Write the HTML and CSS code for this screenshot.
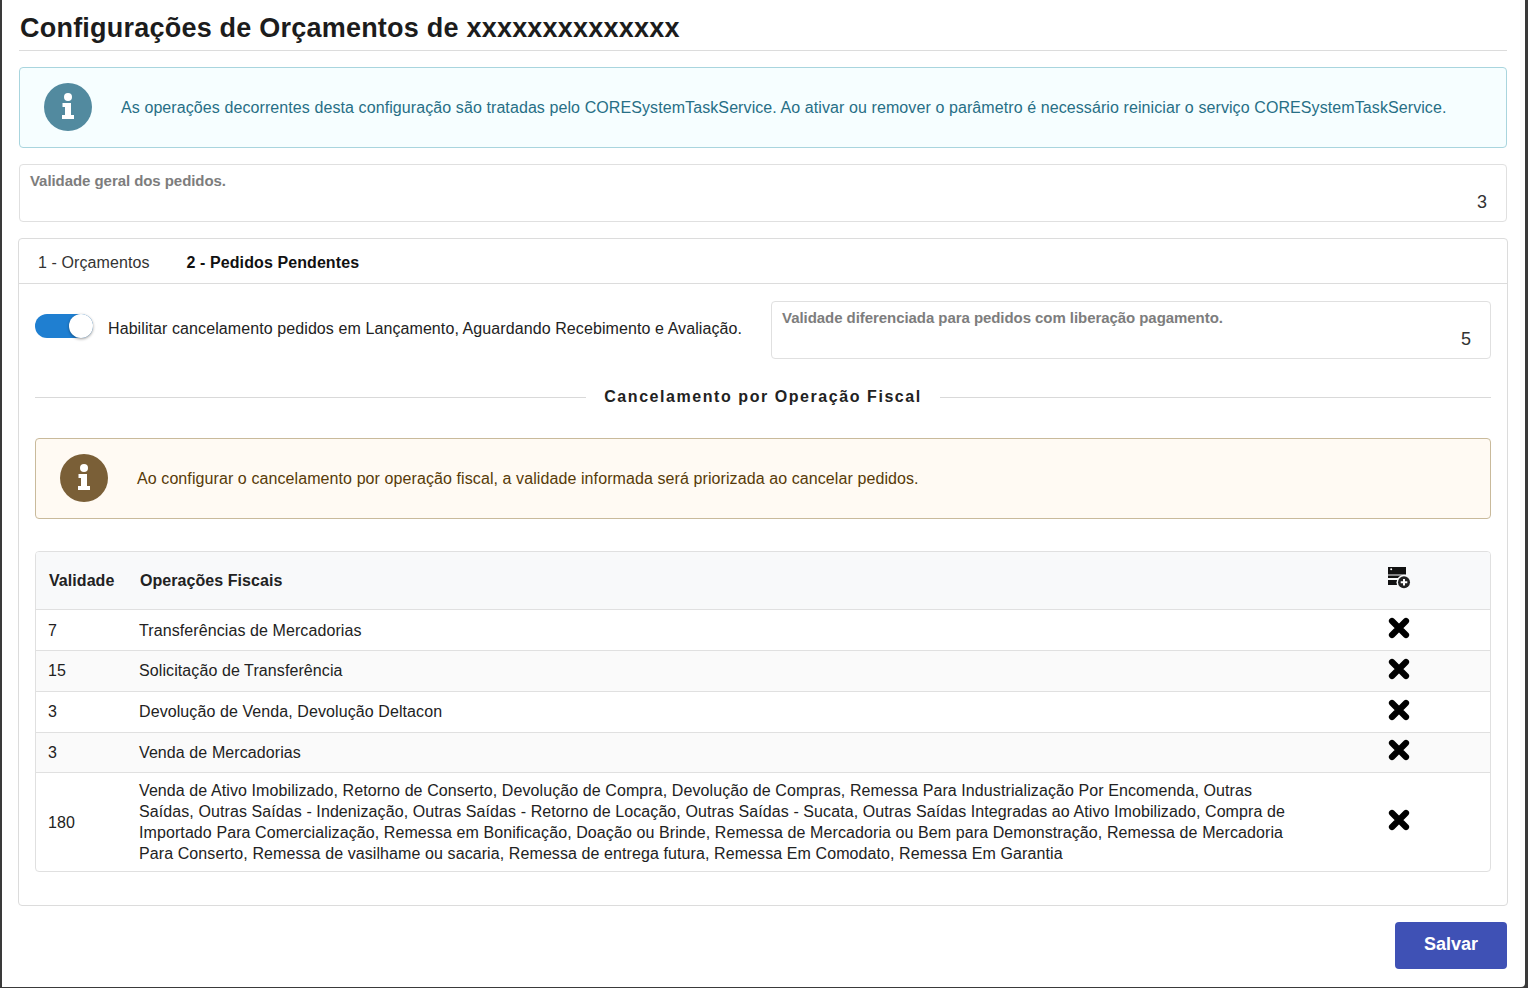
FILE: index.html
```html
<!DOCTYPE html>
<html lang="pt-BR">
<head>
  <meta charset="UTF-8" />
  <title>Configurações de Orçamentos</title>
  <link rel="stylesheet" href="styles.css">
</head>
<body>
  <div class="janela">
    <h1 class="titulo">Configurações de Orçamentos de xxxxxxxxxxxxxx</h1>

    <div class="aviso aviso-info">
      <svg class="aviso-icone" viewBox="0 0 48 48"><circle cx="24" cy="24" r="24" fill="currentColor"/><circle cx="24" cy="14" r="4" fill="#fff"/><path d="M18.500 20h8.500v12h3v4H18v-4h3v-8h-2.500z" fill="#fff"/></svg>
      <p>As operações decorrentes desta configuração são tratadas pelo CORESystemTaskService. Ao ativar ou remover o parâmetro é necessário reiniciar o serviço CORESystemTaskService.</p>
    </div>

    <div class="campo">
      <label>Validade geral dos pedidos.</label>
      <div class="campo-valor">3</div>
    </div>

    <div class="cartao">
      <div class="abas">
        <span class="aba">1 - Orçamentos</span>
        <span class="aba ativa">2 - Pedidos Pendentes</span>
      </div>
      <div class="cartao-corpo">
        <div class="linha-opcoes">
          <div class="toggle"><span class="toggle-bola"></span></div>
          <span class="toggle-texto">Habilitar cancelamento pedidos em Lançamento, Aguardando Recebimento e Avaliação.</span>
          <div class="campo campo-menor">
            <label>Validade diferenciada para pedidos com liberação pagamento.</label>
            <div class="campo-valor">5</div>
          </div>
        </div>

        <div class="divisor"><span>Cancelamento por Operação Fiscal</span></div>

        <div class="aviso aviso-alerta">
          <svg class="aviso-icone" viewBox="0 0 48 48"><circle cx="24" cy="24" r="24" fill="currentColor"/><circle cx="24" cy="14" r="4" fill="#fff"/><path d="M18.500 20h8.500v12h3v4H18v-4h3v-8h-2.500z" fill="#fff"/></svg>
          <p>Ao configurar o cancelamento por operação fiscal, a validade informada será priorizada ao cancelar pedidos.</p>
        </div>

        <div class="tabela-borda">
          <table class="tabela">
            <thead>
              <tr>
                <th class="col-validade">Validade</th>
                <th class="col-operacoes">Operações Fiscais</th>
                <th class="col-acao">
                  <svg class="icone-add" viewBox="0 0 24 24"><rect x="0" y="1" width="18" height="7.500" fill="#111"/><rect x="0" y="9.500" width="18" height="2.500" fill="#111"/><rect x="0" y="14" width="18" height="5" fill="#111"/><circle cx="3.200" cy="3.200" r="1" fill="#fff"/><circle cx="16" cy="16.300" r="7.500" fill="#f8f9fa"/><circle cx="16" cy="16.300" r="6" fill="#222"/><path d="M15 13h2v2.300h2.300v2H17v2.300h-2v-2.300h-2.300v-2H15z" fill="#fff"/></svg>
                </th>
              </tr>
            </thead>
            <tbody>
              <tr>
                <td>7</td>
                <td>Transferências de Mercadorias</td>
                <td class="col-acao"><svg class="icone-x" viewBox="0 0 24 24"><path d="M5 5l14 14M19 5L5 19" stroke="#000" stroke-width="6.200" stroke-linecap="round"/></svg></td>
              </tr>
              <tr>
                <td>15</td>
                <td>Solicitação de Transferência</td>
                <td class="col-acao"><svg class="icone-x" viewBox="0 0 24 24"><path d="M5 5l14 14M19 5L5 19" stroke="#000" stroke-width="6.200" stroke-linecap="round"/></svg></td>
              </tr>
              <tr>
                <td>3</td>
                <td>Devolução de Venda, Devolução Deltacon</td>
                <td class="col-acao"><svg class="icone-x" viewBox="0 0 24 24"><path d="M5 5l14 14M19 5L5 19" stroke="#000" stroke-width="6.200" stroke-linecap="round"/></svg></td>
              </tr>
              <tr>
                <td>3</td>
                <td>Venda de Mercadorias</td>
                <td class="col-acao"><svg class="icone-x" viewBox="0 0 24 24"><path d="M5 5l14 14M19 5L5 19" stroke="#000" stroke-width="6.200" stroke-linecap="round"/></svg></td>
              </tr>
              <tr>
                <td class="celula-baixa">180</td>
                <td>Venda de Ativo Imobilizado, Retorno de Conserto, Devolução de Compra, Devolução de Compras, Remessa Para Industrialização Por Encomenda, Outras Saídas, Outras Saídas - Indenização, Outras Saídas - Retorno de Locação, Outras Saídas - Sucata, Outras Saídas Integradas ao Ativo Imobilizado, Compra de Importado Para Comercialização, Remessa em Bonificação, Doação ou Brinde, Remessa de Mercadoria ou Bem para Demonstração, Remessa de Mercadoria Para Conserto, Remessa de vasilhame ou sacaria, Remessa de entrega futura, Remessa Em Comodato, Remessa Em Garantia</td>
                <td class="col-acao"><svg class="icone-x" viewBox="0 0 24 24"><path d="M5 5l14 14M19 5L5 19" stroke="#000" stroke-width="6.200" stroke-linecap="round"/></svg></td>
              </tr>
            </tbody>
          </table>
        </div>
      </div>
    </div>

    <div class="rodape">
      <button type="button" class="btn-salvar">Salvar</button>
    </div>
  </div>
</body>
</html>
```

FILE: styles.css
```css
* {
  box-sizing: border-box;
}
html, body {
  height: 100%;
}
body {
  margin: 0;
  background-color: #3a3a3a;
  font-family: "Liberation Sans", Arial, sans-serif;
  color: #212121;
  font-size: 16px;
  letter-spacing: 0.09px;
  overflow: hidden;
}
.janela {
  background-color: #fff;
  width: 1523px;
  height: 987px;
  margin-left: 2px;
  padding: 0 18px 0 17px;
  border-bottom-right-radius: 4px;
}
.titulo {
  margin: 0 0 16px;
  height: 51px;
  padding: 12px 0 0 1px;
  font-size: 27px;
  line-height: 32px;
  font-weight: bold;
  letter-spacing: 0.22px;
  color: #1c1c1c;
  border-bottom: 1px solid #dcdcdc;
}
.aviso {
  display: flex;
  align-items: center;
  height: 81px;
  padding: 0 24px;
  border: 1px solid;
  border-radius: 4px;
  font-size: 16px;
}
.aviso p {
  margin: 0 0 0 29px;
}
.aviso-icone {
  width: 48px;
  height: 48px;
  flex: none;
  margin-top: -1px;
}
.aviso-info {
  background-color: #f6feff;
  border-color: #a9d5de;
  color: #276f86;
}
.aviso-info .aviso-icone {
  color: #528a9f;
}
.aviso-alerta {
  background-color: #fffaf3;
  border-color: #c9ba9b;
  color: #573a08;
}
.aviso-alerta .aviso-icone {
  color: #7a5f37;
}
.campo {
  position: relative;
  height: 58px;
  margin-top: 16px;
  padding: 7px 10px;
  border: 1px solid #e0e0e0;
  border-radius: 4px;
}
.campo label {
  display: block;
  font-size: 15px;
  line-height: 17px;
  font-weight: bold;
  letter-spacing: -0.06px;
  color: #7d7d7d;
}
.campo-valor {
  margin-top: 1px;
  padding-right: 9px;
  text-align: right;
  font-size: 18px;
  line-height: 24px;
  color: #333;
}
.cartao {
  width: 1490px;
  height: 668px;
  margin-top: 16px;
  margin-left: -1px;
  border: 1px solid #dcdcdc;
  border-radius: 4px;
}
.abas {
  display: flex;
  height: 45px;
  border-bottom: 1px solid #dcdcdc;
  padding-left: 19px;
  gap: 37px;
}
.aba {
  font-size: 16px;
  line-height: 47px;
  color: #333;
}
.aba.ativa {
  font-weight: bold;
  color: #111;
}
.cartao-corpo {
  padding: 17px 16px 0;
}
.linha-opcoes {
  display: flex;
  align-items: center;
}
.toggle {
  position: relative;
  width: 58px;
  height: 24px;
  flex: none;
  margin-top: -8px;
  background-color: #1f7fd1;
  border-radius: 12px;
}
.toggle-bola {
  position: absolute;
  right: 0;
  top: 0;
  width: 24px;
  height: 24px;
  border-radius: 50%;
  background-color: #fff;
  box-shadow: 0 1px 3px rgba(0, 0, 0, 0.4);
}
.toggle-texto {
  margin: -2px 0 0 15px;
  color: #222;
  white-space: nowrap;
}
.campo-menor {
  flex: 1;
  margin: 0 0 0 29px;
}
.divisor {
  display: flex;
  align-items: center;
  gap: 18px;
  margin-top: 25px;
  height: 26px;
  font-weight: bold;
  letter-spacing: 1.56px;
  color: #222;
  white-space: nowrap;
}
.divisor::before,
.divisor::after {
  content: "";
  flex: 1;
  height: 1px;
  background-color: #d9d9d9;
}
.aviso-alerta {
  margin-top: 28px;
}
.tabela-borda {
  margin-top: 32px;
  border: 1px solid #e0e0e0;
  border-radius: 4px;
  overflow: hidden;
}
.tabela {
  width: 100%;
  border-collapse: collapse;
  table-layout: fixed;
}
.tabela th {
  height: 57px;
  padding: 2px 12px 0 13px;
  text-align: left;
  font-weight: bold;
  letter-spacing: 0.06px;
  background-color: #f8f9fa;
  color: #222;
}
.tabela td {
  height: 41px;
  padding: 0 12px;
  border-top: 1px solid #e0e0e0;
  line-height: 21px;
  color: #222;
}
.tabela td:nth-child(2) {
  padding-right: 92px;
}
.tabela tbody tr:nth-child(even) td {
  background-color: #fafafa;
}
.tabela tbody tr:first-child td:not(.col-acao) {
  padding-top: 2px;
}
.tabela tbody tr:nth-child(4) td {
  height: 40px;
}
.tabela tbody tr:last-child td {
  height: 99px;
}
.tabela .celula-baixa {
  padding-top: 2px;
}
.col-validade {
  width: 91px;
}
.col-operacoes {
  width: 1260px;
}
.tabela .col-acao {
  padding: 0;
}
.icone-add {
  display: block;
  width: 24px;
  height: 24px;
  margin: -4px 0 0 1px;
}
.icone-x {
  display: block;
  width: 24px;
  height: 24px;
  margin-top: -4px;
}
.rodape {
  display: flex;
  justify-content: flex-end;
  margin-top: 16px;
}
.btn-salvar {
  width: 112px;
  height: 47px;
  padding: 0 0 2px;
  border: none;
  border-radius: 4px;
  background-color: #3f51b5;
  color: #fff;
  font-family: inherit;
  font-size: 18px;
  font-weight: bold;
}
```
